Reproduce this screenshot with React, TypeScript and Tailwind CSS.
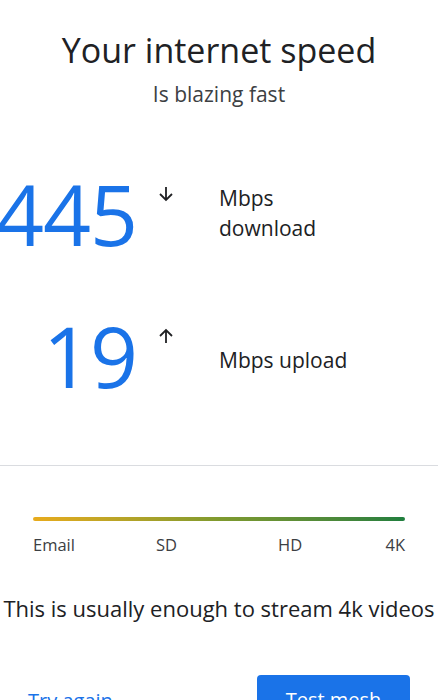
import React from 'react';

const font = { fontFamily: '"Open Sans", Roboto, sans-serif' };

const ArrowDown = () => (
  <svg width="18" height="18" viewBox="0 0 18 18" fill="none" stroke="#202124" strokeWidth="1.8">
    <path d="M9 2v13M3 9l6 6 6-6" />
  </svg>
);

const ArrowUp = () => (
  <svg width="18" height="18" viewBox="0 0 18 18" fill="none" stroke="#202124" strokeWidth="1.8">
    <path d="M9 16V3M3 9l6-6 6 6" />
  </svg>
);

const App: React.FC = () => {
  return (
    <div className="w-[438px] h-[700px] bg-white overflow-hidden text-[#202124]" style={font}>
      {/* Header */}
      <div className="pt-[27px] flex flex-col items-center">
        <h1 className="text-[34px] leading-[46px] font-normal">Your internet speed</h1>
        <p className="text-[21px] leading-[28px] text-[#3c4043] mt-[7px]">Is blazing fast</p>
      </div>

      {/* Download */}
      <div className="mt-[56px] flex items-start">
        <div className="w-[137px] shrink-0 flex justify-end">
          <span className="text-[84px] leading-[100px] text-[#1a73e8] tracking-[-1px] whitespace-nowrap">445</span>
        </div>
        <div className="w-[82px] shrink-0 pl-[20px] pt-[21px]">
          <ArrowDown />
        </div>
        <div className="pt-[19px] text-[21px] leading-[30px]">
          <div>Mbps</div>
          <div>download</div>
        </div>
      </div>

      {/* Upload */}
      <div className="mt-[42px] flex items-start">
        <div className="w-[137px] shrink-0 flex justify-end">
          <span className="text-[84px] leading-[100px] text-[#1a73e8] tracking-[-1px]">19</span>
        </div>
        <div className="w-[82px] shrink-0 pl-[20px] pt-[21px]">
          <ArrowUp />
        </div>
        <div className="pt-[39px] text-[21px] leading-[30px]">Mbps upload</div>
      </div>

      <div className="mt-[59px] border-t border-[#dadce0]" />

      {/* Quality bar */}
      <div className="px-[33px] mt-[51px]">
        <div className="h-[4px] rounded-full bg-gradient-to-r from-[#e8ab1c] via-[#7f9a2e] to-[#1e7e3e]" />
        <div className="mt-[14px] flex text-[16.5px] leading-[20px] text-[#3c4043]">
          <span className="w-[123px]">Email</span>
          <span className="w-[122px]">SD</span>
          <span className="flex-1">HD</span>
          <span>4K</span>
        </div>
      </div>

      <p className="mt-[38px] text-center text-[22px] leading-[30px] whitespace-nowrap -mx-[4px]">
        This is usually enough to stream 4k videos
      </p>

      {/* Actions */}
      <div className="mt-[52px] flex items-start justify-between pl-[28px] pr-[28px]">
        <button className="text-[#1a73e8] text-[20px] leading-[28px] pt-[12px]">Try again</button>
        <button className="bg-[#1a73e8] text-white text-[20px] leading-[28px] rounded-[4px] w-[153px] h-[48px] pt-[1px]">
          Test mesh
        </button>
      </div>
    </div>
  );
};

export default App;
